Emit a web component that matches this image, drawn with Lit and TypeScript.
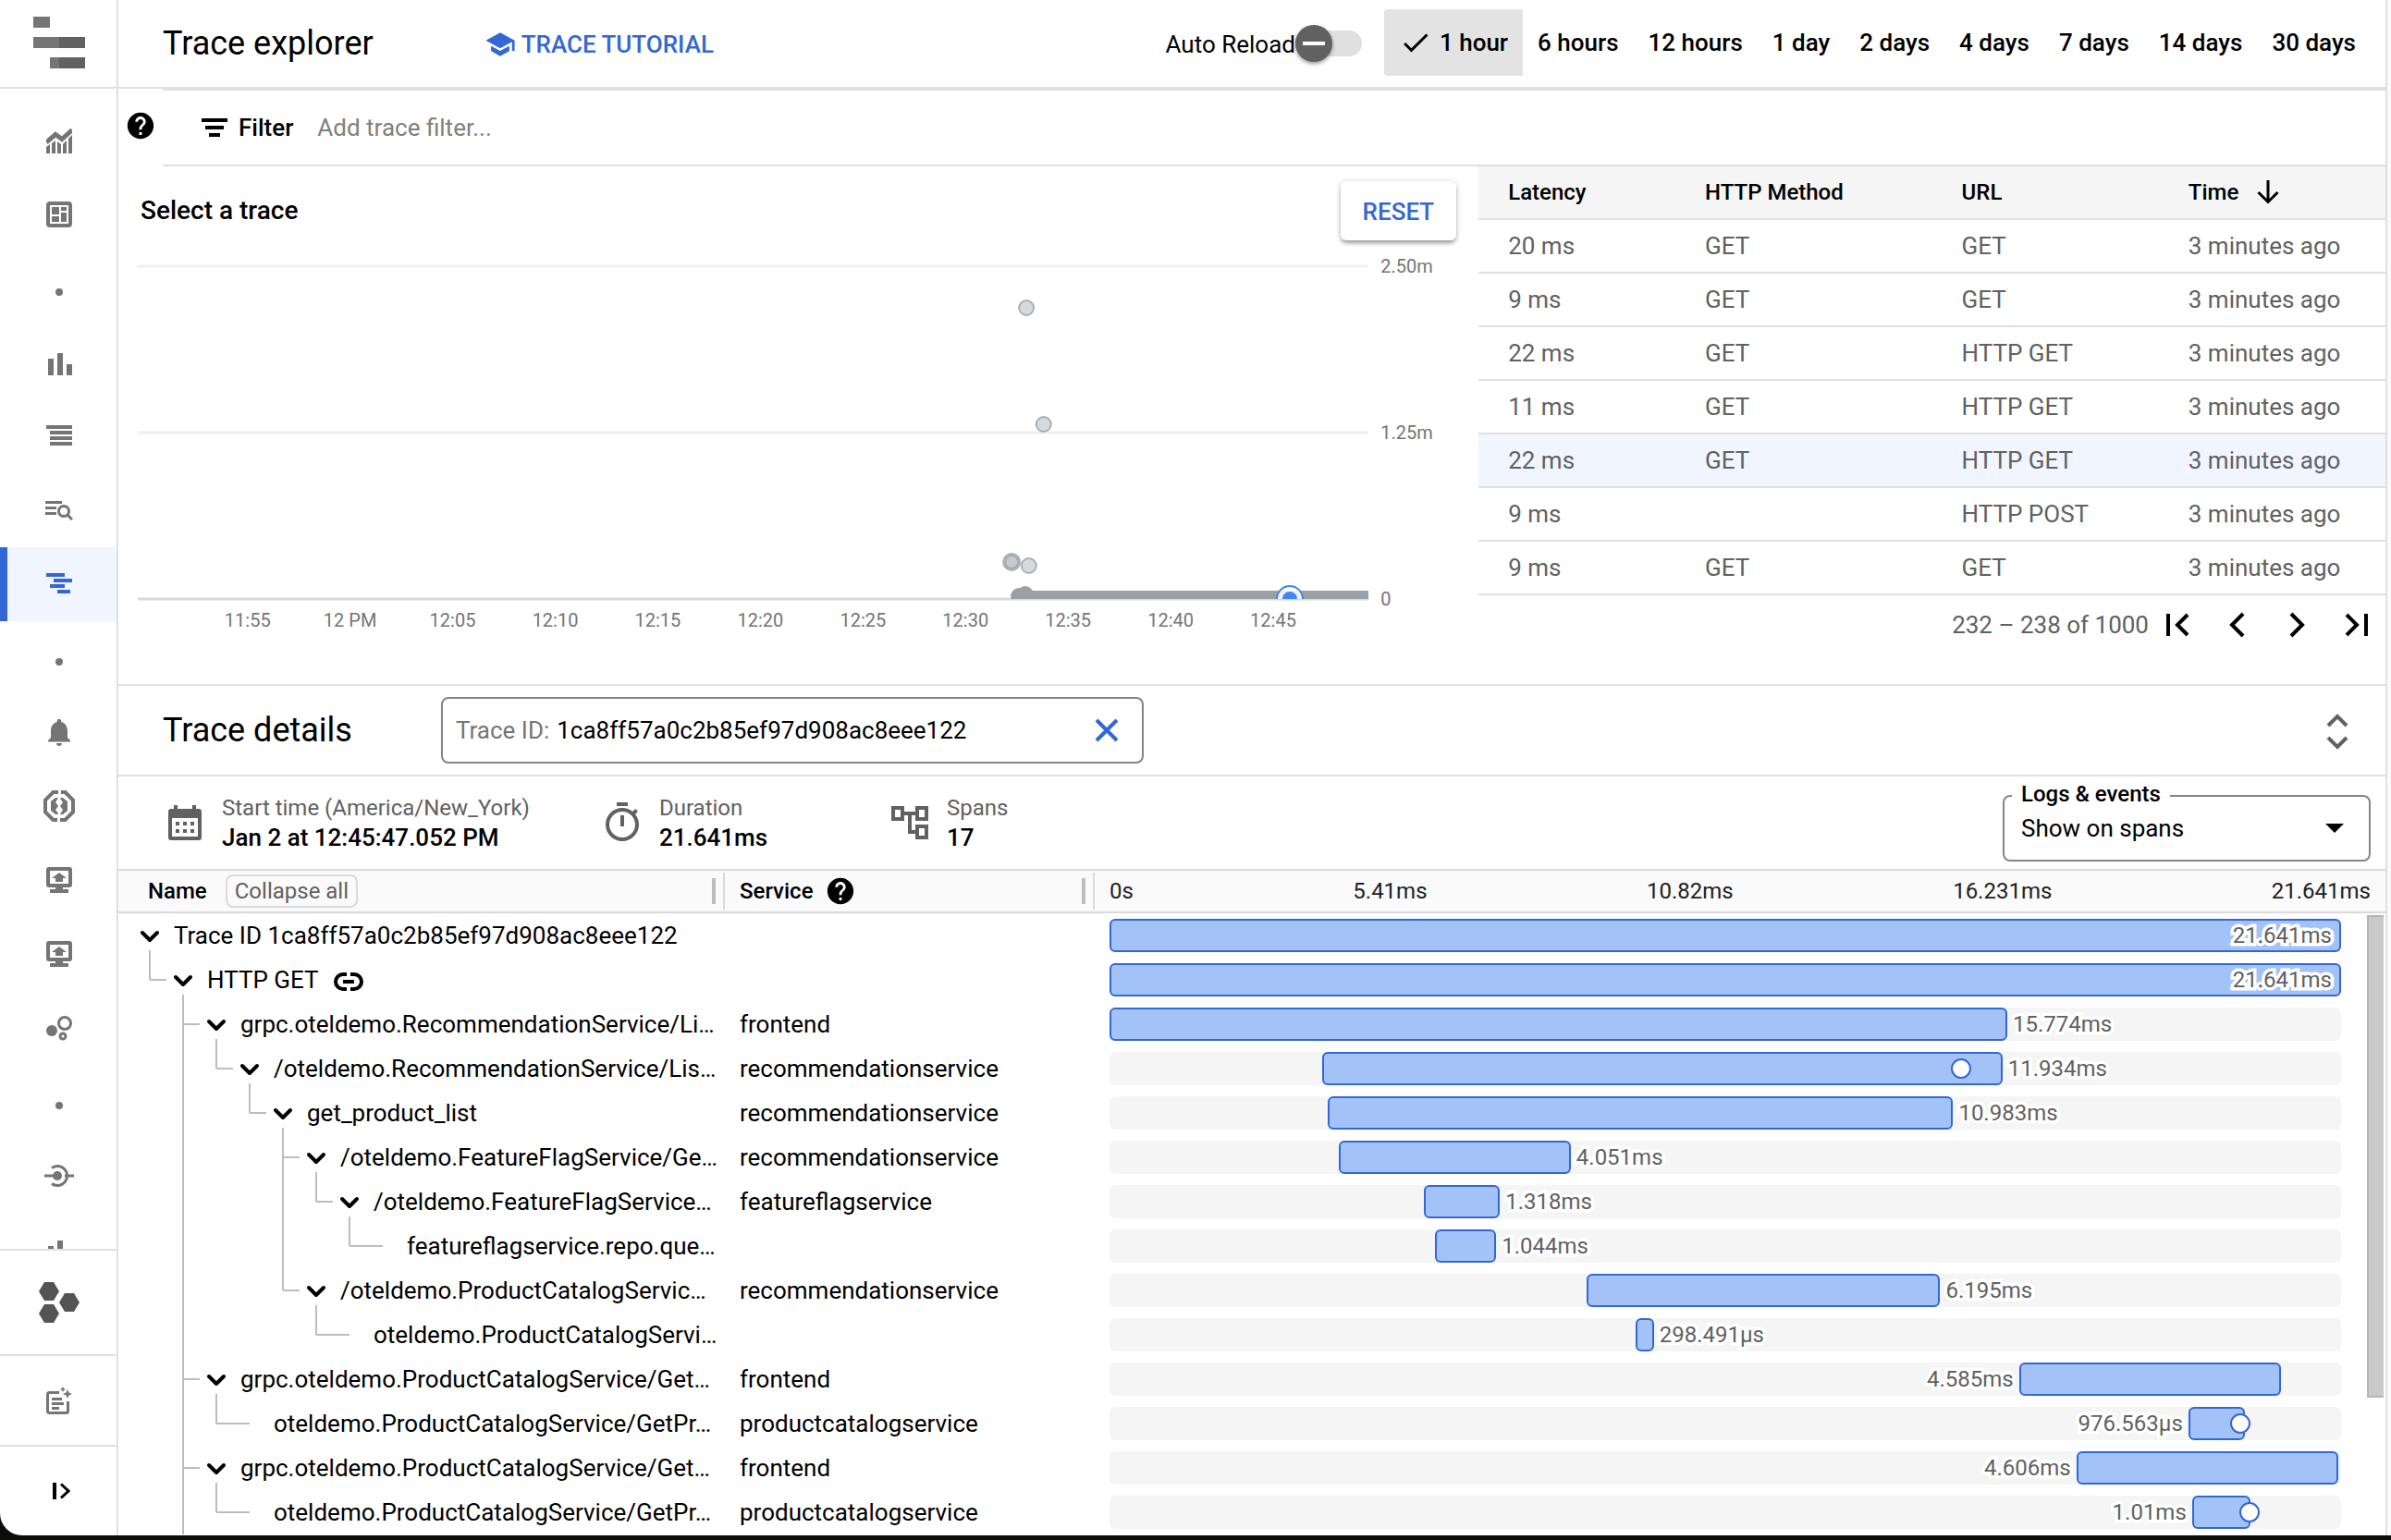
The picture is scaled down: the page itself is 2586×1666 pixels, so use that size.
import { LitElement, html, svg, css, nothing } from "lit";
import { customElement, property, state } from "lit/decorators.js";
import { classMap } from "lit/directives/class-map.js";
import { styleMap } from "lit/directives/style-map.js";

const TRACE_ID = "1ca8ff57a0c2b85ef97d908ac8eee122";

/* ---------- icons ---------- */

const ICONS: Record<string, { w: number; h: number; vb?: string; art: unknown }> = {
  logo: {
    w: 56, h: 56,
    art: svg`<path fill="#757575" d="M0 0h18v12H0zM0 22h28v12H0zM18 44h10v12H18z"/><path fill="#616161" d="M28 22h28v12H28zM28 44h28v12H28z"/>`,
  },
  metrics: {
    w: 28, h: 28,
    art: svg`<path fill="none" stroke="currentColor" stroke-width="5" d="M0 16L10 7.500l7 5L28 2.500"/><path d="M0 21l4-3v10H0zM6 17l4-3v14H6zM12 15l4 3v10h-4zM18 18l4-4v14h-4zM24 12l4-4v20h-4z"/>`,
  },
  dashboard: {
    w: 28, h: 28,
    art: svg`<rect x="2" y="2" width="24" height="24" rx="2" fill="none" stroke="currentColor" stroke-width="4"/><path d="M6 6h8v8H6zM6 16h8v6H6zM16 6h6v4h-6zM16 12h6v10h-6z"/>`,
  },
  dot: { w: 8, h: 8, art: svg`<circle cx="4" cy="4" r="4"/>` },
  bars: { w: 28, h: 28, art: svg`<path d="M2 10h6v18H2zM12 4h6v24h-6zM22 16h6v12h-6z"/>` },
  lines: { w: 28, h: 24, art: svg`<path d="M0 0h28v4H0zM4 6h24v4H4zM4 12h24v4H4zM4 18h24v4H4z"/>` },
  search: {
    w: 30, h: 22,
    art: svg`<path d="M0 1h18v3H0zM0 7h12v3H0zM0 13h12v3H0z"/><circle cx="20" cy="12" r="5.500" fill="none" stroke="currentColor" stroke-width="3"/><path fill="none" stroke="currentColor" stroke-width="3" d="M24 16l5 5"/>`,
  },
  trace: { w: 28, h: 24, art: svg`<path d="M0 0h20v4H0zM8 6h20v4H8zM4 12h16v4H4zM12 18h14v4H12z"/>` },
  bell: {
    w: 36, h: 36, vb: "0 0 24 24",
    art: svg`<path d="M12 22c1.100 0 2-.9 2-2h-4c0 1.100.89 2 2 2zm6-6v-5c0-3.070-1.640-5.640-4.500-6.320V4c0-.83-.67-1.500-1.500-1.500s-1.500.67-1.500 1.500v.68C7.630 5.360 6 7.920 6 11v5l-2 2v1h16v-1l-2-2z"/>`,
  },
  errors: {
    w: 34, h: 34,
    art: svg`<path fill="none" stroke="currentColor" stroke-width="4" d="M16 2h-5.500L2 10.500v13L10.500 32H15M19 2h4.500L32 10.500v13L23.500 32H18"/><path d="M8 12l5-4h3l-3 5 3 4-3 4 3 4-1 1h-2l-5-4zM18 9l1-1h2l5 4v10l-5 4h-3l3-5-3-4 3-4z"/>`,
  },
  monitor: {
    w: 28, h: 28,
    art: svg`<rect x="2" y="2" width="24" height="18" rx="1" fill="none" stroke="currentColor" stroke-width="4"/><path d="M6 12l8-6 8 6h-4v4h-8v-4zM10 20h8v4h6v4H4v-4h6z"/>`,
  },
  bubbles: {
    w: 30, h: 28,
    art: svg`<circle cx="7" cy="17" r="6"/><circle cx="21" cy="9" r="6.500" fill="none" stroke="currentColor" stroke-width="3"/><circle cx="19" cy="23" r="3" fill="none" stroke="currentColor" stroke-width="3"/>`,
  },
  probe: {
    w: 32, h: 24,
    art: svg`<circle cx="14" cy="12" r="5"/><path fill="none" stroke="currentColor" stroke-width="3" d="M0 12h10M22 12h10M8 3.500a10.500 10.500 0 1 1 0 17"/>`,
  },
  hexes: {
    w: 44, h: 44,
    art: svg`<path d="M6 0h10l6 10-6 10H6L0 10zM6 24h10l6 10-6 10H6L0 34zM28 12h10l6 10-6 10H28l-6-10z"/>`,
  },
  notes: {
    w: 28, h: 30,
    art: svg`<path fill="none" stroke="currentColor" stroke-width="3" d="M14 6.500H3.500q-2 0-2 2v18q0 2 2 2h18q2 0 2-2V16"/><path d="M6 12h11v3H6zM6 17h13v3H6zM6 22h8v3H6zM23 3l1.500 3.500L28 8l-3.500 1.500L23 13l-1.500-3.500L18 8l3.500-1.500zM18 0l1 2 2 1-2 1-1 2-1-2-2-1 2-1z"/>`,
  },
  expand: {
    w: 20, h: 18,
    art: svg`<path d="M1 0h4v18H1z"/><path fill="none" stroke="currentColor" stroke-width="3" d="M10 1.500l8 7.500-8 7.500"/>`,
  },
  school: {
    w: 34, h: 34, vb: "0 0 24 24",
    art: svg`<path d="M5 13.180v4L12 21l7-3.820v-4L12 17l-7-3.820zM12 3L1 9l11 6 9-4.910V17h2V9L12 3z"/>`,
  },
  help: {
    w: 34, h: 34, vb: "0 0 24 24",
    art: svg`<path d="M12 2C6.480 2 2 6.480 2 12s4.480 10 10 10 10-4.480 10-10S17.520 2 12 2zm1 17h-2v-2h2v2zm2.070-7.750l-.9.92C13.450 12.900 13 13.500 13 15h-2v-.5c0-1.100.45-2.100 1.170-2.830l1.240-1.260c.37-.36.59-.86.59-1.410 0-1.100-.9-2-2-2s-2 .9-2 2H8c0-2.210 1.790-4 4-4s4 1.790 4 4c0 .88-.36 1.680-.93 2.250z"/>`,
  },
  check: { w: 36, h: 36, vb: "0 0 24 24", art: svg`<path d="M9 16.170L4.830 12l-1.420 1.410L9 19 21 7l-1.410-1.410z"/>` },
  filter: { w: 28, h: 20, art: svg`<path d="M0 0h28v4H0zM4 8h20v4H4zM8 16h12v4H8z"/>` },
  sortDown: {
    w: 24, h: 26,
    art: svg`<path fill="none" stroke="currentColor" stroke-width="3" d="M12 0v24M1.500 13L12 23.500 22.500 13"/>`,
  },
  first: { w: 26, h: 28, art: svg`<path fill="none" stroke="currentColor" stroke-width="4" d="M2 2v24M23 3L12 14l11 11"/>` },
  prev: { w: 26, h: 28, art: svg`<path fill="none" stroke="currentColor" stroke-width="4" d="M19 2L7 14l12 12"/>` },
  next: { w: 26, h: 28, art: svg`<path fill="none" stroke="currentColor" stroke-width="4" d="M7 2l12 12L7 26"/>` },
  last: { w: 26, h: 28, art: svg`<path fill="none" stroke="currentColor" stroke-width="4" d="M24 2v24M3 3l11 11L3 25"/>` },
  close: { w: 26, h: 26, art: svg`<path fill="none" stroke="currentColor" stroke-width="4" d="M2 2l22 22M24 2L2 24"/>` },
  unfold: {
    w: 24, h: 40,
    art: svg`<path fill="none" stroke="currentColor" stroke-width="4" d="M2 14L12 4l10 10M2 27l10 10 10-10"/>`,
  },
  calendar: {
    w: 36, h: 38,
    art: svg`<path fill-rule="evenodd" d="M6 0h4v4h16V0h4v4h3q3 0 3 3v28q0 3-3 3H3q-3 0-3-3V7q0-3 3-3h3zM4 14v20h28V14z"/><path d="M8 18h4v4H8zM16 18h4v4h-4zM24 18h4v4h-4zM8 26h4v4H8zM16 26h4v4h-4zM24 26h4v4h-4z"/>`,
  },
  timer: {
    w: 48, h: 48, vb: "0 0 24 24",
    art: svg`<path d="M15 1H9v2h6V1zm-4 13h2V8h-2v6zm8.030-6.610l1.420-1.420c-.43-.51-.9-.99-1.410-1.410l-1.420 1.420C16.070 4.740 14.120 4 12 4c-4.970 0-9 4.030-9 9s4.020 9 9 9 9-4.030 9-9c0-2.120-.74-4.070-1.970-5.610zM12 20c-3.870 0-7-3.130-7-7s3.130-7 7-7 7 3.130 7 7-3.130 7-7 7z"/>`,
  },
  tree: {
    w: 48, h: 48, vb: "0 0 24 24",
    art: svg`<path d="M22 11V3h-7v3H9V3H2v8h7V8h2v10h4v3h7v-8h-7v3h-2V8h2v3h7zM7 9H4V5h3v4zm10 6h3v4h-3v-4zm0-10h3v4h-3V5z"/>`,
  },
  dropdown: { w: 20, h: 10, art: svg`<path d="M0 0h20L10 10z"/>` },
  chevron: {
    w: 22, h: 14,
    art: svg`<path fill="none" stroke="currentColor" stroke-width="4" stroke-linecap="round" stroke-linejoin="round" d="M3 3l8 8 8-8"/>`,
  },
  link: {
    w: 32, h: 20,
    art: svg`<path fill="none" stroke="currentColor" stroke-width="4" d="M14 2h-4a8 8 0 0 0 0 16h4M18 2h4a8 8 0 0 1 0 16h-4M10 10h12"/>`,
  },
};

const icon = (name: string) => {
  const i = ICONS[name];
  return html`<svg class="icon" aria-hidden="true" width=${i.w} height=${i.h} viewBox=${i.vb ?? `0 0 ${i.w} ${i.h}`}>${i.art}</svg>`;
};

const shared = css`
  *, *::before, *::after { box-sizing: border-box; }
  .icon { display: block; flex: none; fill: currentColor; }
  button, input, select {
    font: inherit; color: inherit; margin: 0; padding: 0; border: 0;
    background: none; outline: none;
  }
  button { cursor: pointer; display: flex; align-items: center; justify-content: center; }
  h1, h2, h3, dl, dt, dd { margin: 0; font: inherit; }
`;

/* ---------- side navigation ---------- */

@customElement("side-nav")
class SideNav extends LitElement {
  private items = [
    ["metrics", "Metrics"], ["dashboard", "Dashboards"], ["dot", ""], ["bars", "Metrics explorer"],
    ["lines", "Logs"], ["search", "Log analytics"], ["trace", "Trace explorer"], ["dot", ""],
    ["bell", "Alerting"], ["errors", "Error reporting"], ["monitor", "Uptime checks"],
    ["monitor", "Synthetic monitoring"], ["bubbles", "SLOs"], ["dot", ""], ["probe", "Integrations"],
    ["bars", "Metrics management"],
  ];

  static styles = [shared, css`
    :host { display: flex; flex-direction: column; min-height: 0; color: #757575; border-right: 2px solid #e0e0e0; }
    .logo { flex: none; height: 96px; padding: 18px 0 0 36px; border-bottom: 2px solid #e0e0e0; }
    .items { flex: 1; min-height: 0; overflow: hidden; padding-top: 16px; }
    .item { display: flex; align-items: center; justify-content: center; height: 80px; padding-left: 2px; color: inherit; }
    .item.dot { padding-top: 8px; }
    .item.active { background: #f0f5ff; color: #3367d6; border-left: 8px solid #3367d6; padding: 0 6px 0 0; }
    .foot { flex: none; width: 100%; height: 98px; padding-left: 2px; border-top: 2px solid #e0e0e0; }
    .foot.tall { height: 114px; color: #545454; }
    .foot.toggle { color: #000; padding-left: 6px; }
  `];

  render() {
    return html`
      <div class="logo">${icon("logo")}</div>
      <nav class="items" aria-label="Observability">
        ${this.items.map(([name, label]) => name === "dot"
          ? html`<div class="item dot">${icon(name)}</div>`
          : html`<a class=${classMap({ item: true, active: name === "trace" })} href="#" aria-label=${label}>${icon(name)}</a>`)}
      </nav>
      <button class="foot tall" aria-label="Resources">${icon("hexes")}</button>
      <button class="foot" aria-label="Release notes">${icon("notes")}</button>
      <button class="foot toggle" aria-label="Expand navigation">${icon("expand")}</button>
    `;
  }
}

/* ---------- page header ---------- */

@customElement("page-header")
class PageHeader extends LitElement {
  @state() private range = "1 hour";
  private ranges = ["1 hour", "6 hours", "12 hours", "1 day", "2 days", "4 days", "7 days", "14 days", "30 days"];

  static styles = [shared, css`
    :host {
      display: flex; align-items: center; height: 96px; padding: 0 16px 2px 48px;
      border-bottom: 2px solid #e0e0e0; white-space: nowrap;
    }
    .title { font-size: 36px; line-height: 48px; padding-top: 2px; }
    .tutorial {
      display: flex; align-items: center; gap: 6px; margin-left: 120px; padding-top: 4px;
      color: #3367d6; font-weight: 500; text-decoration: none;
    }
    .reload { display: flex; align-items: center; margin-left: auto; padding-top: 2px; }
    .reload label { padding-top: 2px; }
    .switch {
      appearance: none; position: relative; width: 72px; height: 28px; border-radius: 14px;
      background: #e0e0e0; cursor: pointer;
    }
    .switch::before {
      content: ""; position: absolute; left: 0; top: -6px; width: 40px; height: 40px;
      border-radius: 50%; background: #616161; box-shadow: 0 2px 4px rgba(0, 0, 0, 0.4);
    }
    .switch::after { content: ""; position: absolute; left: 8px; top: 12px; width: 24px; height: 4px; background: #fff; }
    .ranges { display: flex; margin-left: 24px; font-weight: 500; }
    .range { height: 72px; padding: 0 16px; gap: 8px; border-radius: 4px; }
    .range.on { background: #e3e3e3; border-radius: 4px 0 0 4px; }
  `];

  render() {
    return html`
      <h1 class="title">Trace explorer</h1>
      <a class="tutorial" href="#">${icon("school")}TRACE TUTORIAL</a>
      <div class="reload">
        <label for="reload">Auto Reload</label>
        <input class="switch" id="reload" type="checkbox" role="switch">
      </div>
      <div class="ranges" role="group" aria-label="Time range">
        ${this.ranges.map((r) => html`
          <button class=${classMap({ range: true, on: r === this.range })} aria-pressed=${r === this.range}
            @click=${() => (this.range = r)}>${r === this.range ? icon("check") : nothing}<span>${r}</span></button>`)}
      </div>
    `;
  }
}

/* ---------- latency scatter ---------- */

@customElement("latency-chart")
class LatencyChart extends LitElement {
  private ticks = ["11:55", "12 PM", "12:05", "12:10", "12:15", "12:20", "12:25", "12:30", "12:35", "12:40", "12:45"];
  private outliers = [
    { x: 72.2, y: 73, r: 8 }, { x: 73.6, y: 199, r: 8 },
    { x: 71, y: 348, r: 9 }, { x: 71, y: 348, r: 7 }, { x: 72.4, y: 352, r: 8 },
  ];

  static styles = [shared, css`
    :host { display: flex; flex-direction: column; padding-top: 16px; }
    .head { display: flex; align-items: center; justify-content: space-between; height: 64px; padding: 0 24px; }
    .heading { font-size: 28px; line-height: 36px; font-weight: 500; }
    .reset {
      height: 64px; padding: 2px 24px 0; border-radius: 6px; color: #3367d6; font-weight: 500; background: #fff;
      box-shadow: 0 4px 4px -1px rgba(0, 0, 0, 0.3), 0 1px 6px rgba(0, 0, 0, 0.2);
    }
    .area { padding: 0 119px 0 21px; }
    .plot { display: block; width: 100%; height: 432px; overflow: visible; font-size: 20px; fill: #757575; }
    .grid { stroke: #efefef; stroke-width: 3; }
    .axis { stroke: #d8d8d8; stroke-width: 3; }
    .point { fill: #bdc1c6; fill-opacity: 0.6; stroke: #9aa0a6; stroke-width: 2; stroke-opacity: 0.8; }
    .band { fill: #9aa0a6; }
    .ring { fill: #fff; fill-opacity: 0.85; stroke: #4285f4; stroke-width: 2; }
    .pick { fill: #4285f4; }
  `];

  render() {
    return html`
      <div class="head">
        <h2 class="heading">Select a trace</h2>
        <button class="reset">RESET</button>
      </div>
      <div class="area">
        <svg class="plot" role="img" aria-label="Trace latency over time">
          <defs><clipPath id="above"><rect x="0" y="0" width="100%" height="388"/></clipPath></defs>
          ${[["2.50m", 28], ["1.25m", 208], ["0", 388]].map(([label, y]) => svg`
            <line class=${label === "0" ? "axis" : "grid"} x1="0" x2="100%" y1=${y} y2=${y}></line>
            <svg x="100%" y=${y} overflow="visible"><text x="13" y="7">${label}</text></svg>`)}
          ${this.ticks.map((t, i) => svg`
            <text x=${`${(((i * 5 + 5.35) / 60) * 100).toFixed(2)}%`} y="418" text-anchor="middle">${t}</text>`)}
          ${this.outliers.map((p) => svg`<circle class="point" cx=${`${p.x}%`} cy=${p.y} r=${p.r}></circle>`)}
          <g clip-path="url(#above)">
            <circle class="band" cx="71.600%" cy="385" r="9"></circle>
            <circle class="band" cx="72.100%" cy="383" r="9"></circle>
            <rect class="band" x="71.200%" y="379" width="28.800%" height="9"></rect>
            <circle class="ring" cx="93.600%" cy="388" r="14"></circle>
            <circle class="pick" cx="93.600%" cy="388" r="8"></circle>
          </g>
        </svg>
      </div>
    `;
  }
}

/* ---------- trace list ---------- */

@customElement("trace-list")
class TraceList extends LitElement {
  @state() private selected = 4;
  private rows = [
    ["20 ms", "GET", "GET"], ["9 ms", "GET", "GET"], ["22 ms", "GET", "HTTP GET"], ["11 ms", "GET", "HTTP GET"],
    ["22 ms", "GET", "HTTP GET"], ["9 ms", "", "HTTP POST"], ["9 ms", "GET", "GET"],
  ];

  static styles = [shared, css`
    :host { display: block; color: #616161; }
    .table { width: 100%; table-layout: fixed; border-collapse: separate; border-spacing: 0; }
    .c1 { width: 21.7%; } .c2 { width: 28.3%; } .c3 { width: 25%; }
    .th { height: 58px; padding: 0 0 0 32px; text-align: left; font-size: 24px; font-weight: 500; color: #000; background: #f5f5f5; border-bottom: 2px solid #e0e0e0; }
    .sort { gap: 20px; font-weight: 500; }
    .td { height: 58px; padding: 0 0 0 32px; border-bottom: 2px solid #e0e0e0; }
    .on .td { background: #f0f5ff; }
    .pager { display: flex; align-items: center; justify-content: flex-end; height: 64px; }
    .page { width: 64px; height: 64px; color: #000; }
  `];

  render() {
    return html`
      <table class="table">
        <colgroup><col class="c1"><col class="c2"><col class="c3"><col></colgroup>
        <thead><tr>
          <th class="th" scope="col">Latency</th>
          <th class="th" scope="col">HTTP Method</th>
          <th class="th" scope="col">URL</th>
          <th class="th" scope="col" aria-sort="descending"><button class="sort">Time ${icon("sortDown")}</button></th>
        </tr></thead>
        <tbody>
          ${this.rows.map((r, i) => html`
            <tr class=${classMap({ on: i === this.selected })} @click=${() => (this.selected = i)}>
              ${[...r, "3 minutes ago"].map((c) => html`<td class="td">${c}</td>`)}
            </tr>`)}
        </tbody>
      </table>
      <div class="pager">
        <span>232 – 238 of 1000</span>
        ${[["first", "First page"], ["prev", "Previous page"], ["next", "Next page"], ["last", "Last page"]].map(([n, l]) => html`
          <button class="page" aria-label=${l}>${icon(n)}</button>`)}
      </div>
    `;
  }
}

/* ---------- trace details ---------- */

interface Span {
  depth: number;
  name: string;
  service?: string;
  time: string;
  start: number;
  width: number;
  side: "in" | "after" | "before";
  leaf?: boolean;
  linked?: boolean;
  event?: number;
  /* depths whose guide line passes on to rows below */
  open: number[];
}

const SPANS: Span[] = [
  { depth: 0, name: `Trace ID ${TRACE_ID}`, time: "21.641ms", start: 0, width: 100, side: "in", open: [] },
  { depth: 1, name: "HTTP GET", time: "21.641ms", start: 0, width: 100, side: "in", linked: true, open: [] },
  { depth: 2, name: "grpc.oteldemo.RecommendationService/Li…", service: "frontend", time: "15.774ms", start: 0, width: 72.9, side: "after", open: [1] },
  { depth: 3, name: "/oteldemo.RecommendationService/Lis…", service: "recommendationservice", time: "11.934ms", start: 17.25, width: 55.25, side: "after", event: 69.15, open: [1] },
  { depth: 4, name: "get_product_list", service: "recommendationservice", time: "10.983ms", start: 17.7, width: 50.8, side: "after", open: [1] },
  { depth: 5, name: "/oteldemo.FeatureFlagService/Ge…", service: "recommendationservice", time: "4.051ms", start: 18.65, width: 18.8, side: "after", open: [1, 4] },
  { depth: 6, name: "/oteldemo.FeatureFlagService…", service: "featureflagservice", time: "1.318ms", start: 25.55, width: 6.15, side: "after", open: [1, 4] },
  { depth: 7, name: "featureflagservice.repo.que…", time: "1.044ms", start: 26.45, width: 4.95, side: "after", leaf: true, open: [1, 4] },
  { depth: 5, name: "/oteldemo.ProductCatalogServic…", service: "recommendationservice", time: "6.195ms", start: 38.75, width: 28.7, side: "after", open: [1] },
  { depth: 6, name: "oteldemo.ProductCatalogServi…", time: "298.491µs", start: 42.75, width: 1.45, side: "after", leaf: true, open: [1] },
  { depth: 2, name: "grpc.oteldemo.ProductCatalogService/Get…", service: "frontend", time: "4.585ms", start: 73.85, width: 21.25, side: "before", open: [1] },
  { depth: 3, name: "oteldemo.ProductCatalogService/GetPr…", service: "productcatalogservice", time: "976.563µs", start: 87.6, width: 4.6, side: "before", leaf: true, event: 91.85, open: [1] },
  { depth: 2, name: "grpc.oteldemo.ProductCatalogService/Get…", service: "frontend", time: "4.606ms", start: 78.5, width: 21.3, side: "before", open: [1] },
  { depth: 3, name: "oteldemo.ProductCatalogService/GetPr…", service: "productcatalogservice", time: "1.01ms", start: 87.9, width: 4.75, side: "before", leaf: true, event: 92.55, open: [1] },
];

@customElement("span-table")
class SpanTable extends LitElement {
  @property({ attribute: false }) spans: Span[] = SPANS;

  static styles = [shared, css`
    :host { display: block; position: relative; height: 100%; overflow: hidden; }
    .table { width: 100%; table-layout: fixed; border-collapse: separate; border-spacing: 0; }
    .c1 { width: 656px; } .c2 { width: 400px; }
    .th { height: 46px; padding: 0; text-align: left; font-size: 24px; font-weight: 500; background: #fafafa; border-bottom: 2px solid #dadada; }
    .cell { display: flex; align-items: center; height: 40px; padding-left: 16px; border-right: 2px solid #dadada; }
    .cell.name { padding-left: 32px; }
    .collapse { height: 36px; margin-left: 20px; padding: 0 8px; border: 2px solid #dadada; border-radius: 8px; color: #616161; font-weight: 400; }
    .grip { width: 4px; height: 28px; margin: 0 8px 0 auto; background: #bdbdbd; }
    .help { margin-left: 12px; }
    .scale { display: flex; justify-content: space-between; padding: 0 16px; font-weight: 400; color: #212121; }
    .td { height: 48px; padding: 0; }
    .td.service { padding-left: 16px; }
    .td.lane { padding: 0 48px 0 16px; }
    .node { display: flex; align-items: center; height: 48px; padding-right: 4px; }
    .guides { display: block; flex: none; height: 48px; overflow: visible; }
    .guides path { fill: none; stroke: #bdbdbd; stroke-width: 2; }
    .fold { flex: none; width: 36px; height: 36px; margin-right: 8px; }
    .text { overflow: hidden; text-overflow: ellipsis; white-space: nowrap; }
    .node .icon { margin-top: 2px; }
    .linkto { margin-left: 16px; padding-top: 2px; }
    .track { position: relative; height: 36px; border-radius: 6px; background: #f5f5f5; }
    .bar { position: absolute; top: 0; height: 36px; border: 2px solid #3367d6; border-radius: 6px; background: #a3c2f7; }
    .time {
      position: absolute; top: 0; font-size: 24px; line-height: 32px; color: #616161; white-space: nowrap;
      -webkit-text-stroke: 7px #fff; paint-order: stroke fill; stroke-linejoin: round;
    }
    .time.in { right: 8px; }
    .time.after { left: 100%; margin-left: 8px; }
    .time.before { right: 100%; margin-right: 8px; }
    .event { position: absolute; top: 7px; width: 22px; height: 22px; margin-left: -11px; border: 2px solid #3367d6; border-radius: 50%; background: #fff; }
    .scroll { position: absolute; right: 2px; top: 48px; width: 18px; height: 522px; background: #c9c9c9; border: 2px solid #b5b5b5; border-right: 0; }
  `];

  private guides(s: Span) {
    const x = (d: number) => 34 + d * 36;
    const p = s.depth - 1;
    const parts = s.open.filter((d) => d !== p).map((d) => `M${x(d)} -8V48`);
    if (p >= 0) {
      parts.push(`M${x(p)} -8V${s.open.includes(p) ? 48 : 24}`, `M${x(p)} 24h${s.leaf ? 36 : 18}`);
    }
    return html`<svg class="guides" aria-hidden="true" width=${16 + s.depth * 36} height="48"><path d=${parts.join("")}></path></svg>`;
  }

  render() {
    return html`
      <table class="table">
        <colgroup><col class="c1"><col class="c2"><col></colgroup>
        <thead><tr>
          <th class="th" scope="col"><div class="cell name">Name<button class="collapse">Collapse all</button><span class="grip"></span></div></th>
          <th class="th" scope="col"><div class="cell">Service<span class="help">${icon("help")}</span><span class="grip"></span></div></th>
          <th class="th" scope="col"><div class="scale">${["0s", "5.41ms", "10.82ms", "16.231ms", "21.641ms"].map((t) => html`<span>${t}</span>`)}</div></th>
        </tr></thead>
        <tbody>
          ${this.spans.map((s) => html`
            <tr>
              <td class="td"><div class="node">
                ${this.guides(s)}
                ${s.leaf ? html`<span class="fold"></span>` : html`<button class="fold" aria-label="Collapse" aria-expanded="true">${icon("chevron")}</button>`}
                <span class="text">${s.name}</span>
                ${s.linked ? html`<button class="linkto" aria-label="Copy link">${icon("link")}</button>` : nothing}
              </div></td>
              <td class="td service">${s.service ?? ""}</td>
              <td class="td lane"><div class="track">
                <div class="bar" style=${styleMap({ left: `${s.start}%`, width: `${s.width}%` })}><span class="time ${s.side}">${s.time}</span></div>
                ${s.event ? html`<span class="event" style=${styleMap({ left: `${s.event}%` })}></span>` : nothing}
              </div></td>
            </tr>`)}
        </tbody>
      </table>
      <div class="scroll"></div>
    `;
  }
}

@customElement("trace-details")
class TraceDetails extends LitElement {
  static styles = [shared, css`
    :host { display: flex; flex-direction: column; min-height: 0; white-space: nowrap; }
    .head { flex: none; display: flex; align-items: center; height: 98px; padding: 0 40px 0 48px; border-bottom: 2px solid #e0e0e0; }
    .title { font-size: 36px; line-height: 48px; }
    .field { display: flex; align-items: center; width: 760px; height: 72px; margin-left: 96px; padding: 0 14px; border: 2px solid #80868b; border-radius: 8px; }
    .field label { color: #757575; padding-right: 8px; }
    .field input { flex: 1; min-width: 0; }
    .clear { width: 48px; height: 48px; color: #3367d6; }
    .unfold { margin-left: auto; padding-top: 2px; color: #616161; }
    .info { flex: none; display: flex; align-items: center; height: 102px; padding: 0 16px 0 48px; border-bottom: 2px solid #dadada; }
    .facts { display: flex; align-items: center; }
    .fact { display: grid; grid-template-columns: 48px auto; column-gap: 16px; align-items: center; color: #616161; margin-right: 76px; }
    .fact .icon { grid-row: 1 / 3; justify-self: center; }
    .fact dt { font-size: 24px; line-height: 32px; }
    .fact dd { font-weight: 500; line-height: 32px; color: #000; }
    .fact.wide { margin-right: 130px; }
    .choice { position: relative; margin-left: auto; width: 398px; margin-top: 12px; }
    .choice label { position: absolute; left: 10px; top: -17px; padding: 0 10px; background: #fff; font-size: 24px; line-height: 32px; font-weight: 500; }
    .choice select { appearance: none; display: block; width: 100%; height: 72px; padding: 0 16px 0 18px; border: 2px solid #80868b; border-radius: 8px; }
    .choice .icon { position: absolute; right: 29px; top: 31px; pointer-events: none; }
    .spans { flex: 1; min-height: 0; }
  `];

  render() {
    return html`
      <div class="head">
        <h2 class="title">Trace details</h2>
        <div class="field">
          <label for="tid">Trace ID:</label>
          <input id="tid" type="text" .value=${TRACE_ID}>
          <button class="clear" aria-label="Clear trace ID">${icon("close")}</button>
        </div>
        <button class="unfold" aria-label="Expand panel">${icon("unfold")}</button>
      </div>
      <div class="info">
        <dl class="facts">
          <div class="fact">${icon("calendar")}<dt>Start time (America/New_York)</dt><dd>Jan 2 at 12:45:47.052 PM</dd></div>
          <div class="fact wide">${icon("timer")}<dt>Duration</dt><dd>21.641ms</dd></div>
          <div class="fact">${icon("tree")}<dt>Spans</dt><dd>17</dd></div>
        </dl>
        <div class="choice">
          <select id="logs"><option>Show on spans</option><option>Hide</option></select>
          <label for="logs">Logs &amp; events</label>
          ${icon("dropdown")}
        </div>
      </div>
      <span-table class="spans"></span-table>
    `;
  }
}

/* ---------- application ---------- */

@customElement("app-root")
class AppRoot extends LitElement {
  static styles = [shared, css`
    :host {
      display: block; height: 100vh; padding-bottom: 5px; background: #0c0c0a; overflow: hidden; color: #000;
      font-family: Roboto, "Liberation Sans", sans-serif; font-size: 26px; line-height: 32px; box-sizing: border-box;
    }
    .window {
      display: grid; grid-template-columns: 128px minmax(0, 1fr) 4px; grid-template-rows: minmax(0, 1fr); height: 100%;
      background: #fff; border-bottom-left-radius: 24px; overflow: hidden;
    }
    .main { display: flex; flex-direction: column; min-height: 0; border-right: 2px solid #e0e0e0; }
    .edge { background: #fafafa; }
    .filterrow { flex: none; display: flex; align-items: center; height: 84px; }
    .gutter { width: 48px; padding-bottom: 4px; }
    .filter { flex: 1; display: flex; align-items: center; height: 84px; padding-left: 42px; border: solid #e0e0e0; border-width: 2px 0; }
    .filter label { padding: 0 26px 0 12px; font-weight: 500; }
    .filter input { flex: 1; min-width: 0; }
    .filter input::placeholder { color: #808080; opacity: 1; }
    .overview { flex: none; display: grid; grid-template-columns: 3fr 2fr; height: 562px; border-bottom: 2px solid #e0e0e0; }
    .details { flex: 1; }
  `];

  render() {
    return html`
      <div class="window">
        <side-nav></side-nav>
        <main class="main">
          <page-header></page-header>
          <div class="filterrow">
            <button class="gutter" aria-label="Help">${icon("help")}</button>
            <div class="filter">
              ${icon("filter")}
              <label for="filter">Filter</label>
              <input id="filter" type="text" placeholder="Add trace filter...">
            </div>
          </div>
          <div class="overview">
            <latency-chart></latency-chart>
            <trace-list></trace-list>
          </div>
          <trace-details class="details"></trace-details>
        </main>
        <div class="edge"></div>
      </div>
    `;
  }
}
